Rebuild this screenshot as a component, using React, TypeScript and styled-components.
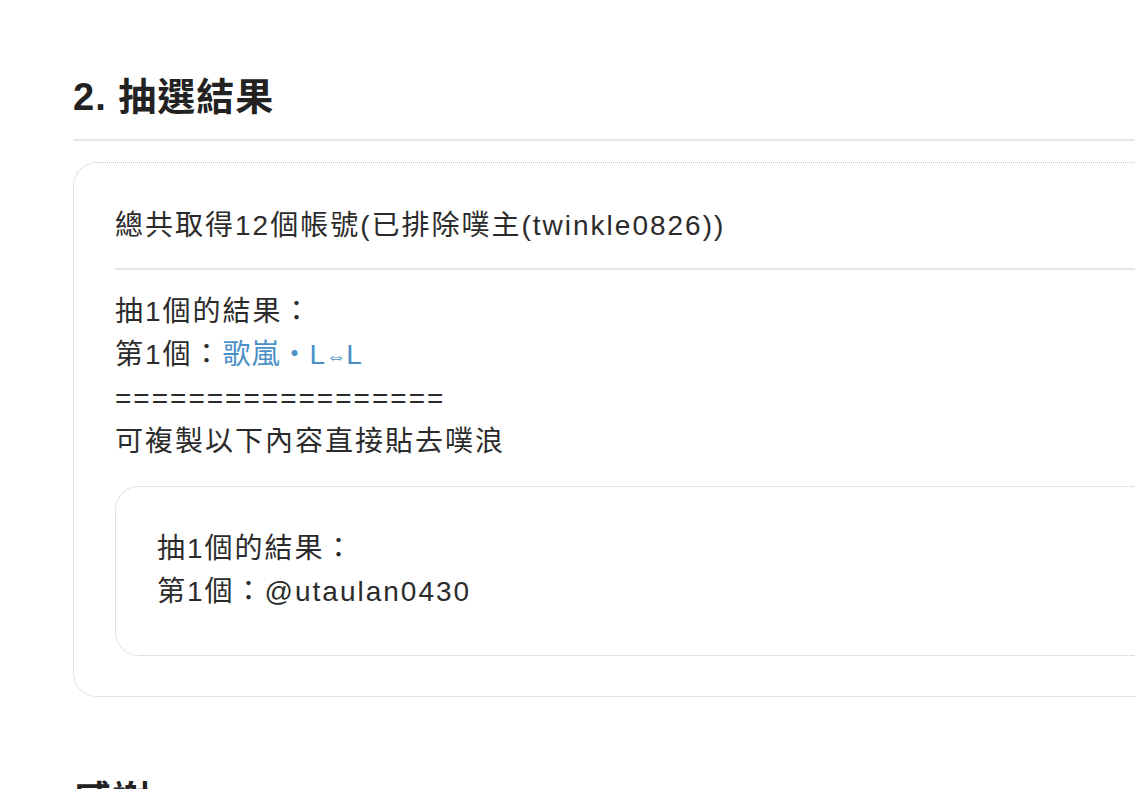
import styled, { createGlobalStyle } from "styled-components";

const GlobalStyle = createGlobalStyle`
  html, body {
    margin: 0;
    padding: 0;
    background: #fff;
    overflow: hidden;
  }
  body {
    font-family: "Liberation Sans", "Noto Sans CJK TC", sans-serif;
    color: #2b2b2b;
  }
`;

const Page = styled.main`
  width: 1240px;
  padding: 74px 0 0 73px;
`;

const SectionTitle = styled.h2`
  margin: 0;
  font-size: 38px;
  font-weight: 700;
  line-height: 46px;
  letter-spacing: 1px;
  color: #222;
  padding-bottom: 19px;
  border-bottom: 2px solid #e6e6e6;
`;

const NextTitle = styled(SectionTitle)`
  margin-top: 80px;
  border-bottom: none;
`;

const Card = styled.section`
  margin-top: 21px;
  border: 1px dotted #c4c4c4;
  border-radius: 24px;
  padding: 41px 0 40px 41px;
`;

const Line = styled.div`
  font-size: 28px;
  line-height: 43.5px;
  height: 43.5px;
  letter-spacing: 2px;
  white-space: nowrap;
`;

const Divider = styled.hr`
  margin: 20px 0 20px;
  border: none;
  border-top: 2px solid #e6e6e6;
`;

const Link = styled.a`
  color: #4a8fc6;
  text-decoration: none;
  letter-spacing: 1px;
`;

const Arrow = styled.span`
  font-size: 20px;
  line-height: 0;
  letter-spacing: 0;
  vertical-align: 1px;
`;

const CopyBox = styled.div`
  margin-top: 22px;
  border: 1px dotted #c4c4c4;
  border-radius: 24px;
  padding: 40px 0 41px 41px;
`;

const App = () => {
  return (
    <>
      <GlobalStyle />
      <Page>
        <SectionTitle>2. 抽選結果</SectionTitle>
        <Card>
          <Line>總共取得12個帳號(已排除噗主(twinkle0826))</Line>
          <Divider />
          <Line>抽1個的結果：</Line>
          <Line>
            第1個：<Link href="#">歌嵐・L<Arrow>⇔</Arrow>L</Link>
          </Line>
          <Line>==================</Line>
          <Line>可複製以下內容直接貼去噗浪</Line>
          <CopyBox>
            <Line>抽1個的結果：</Line>
            <Line>第1個：@utaulan0430</Line>
          </CopyBox>
        </Card>
        <NextTitle>感謝</NextTitle>
      </Page>
    </>
  );
};

export default App;
